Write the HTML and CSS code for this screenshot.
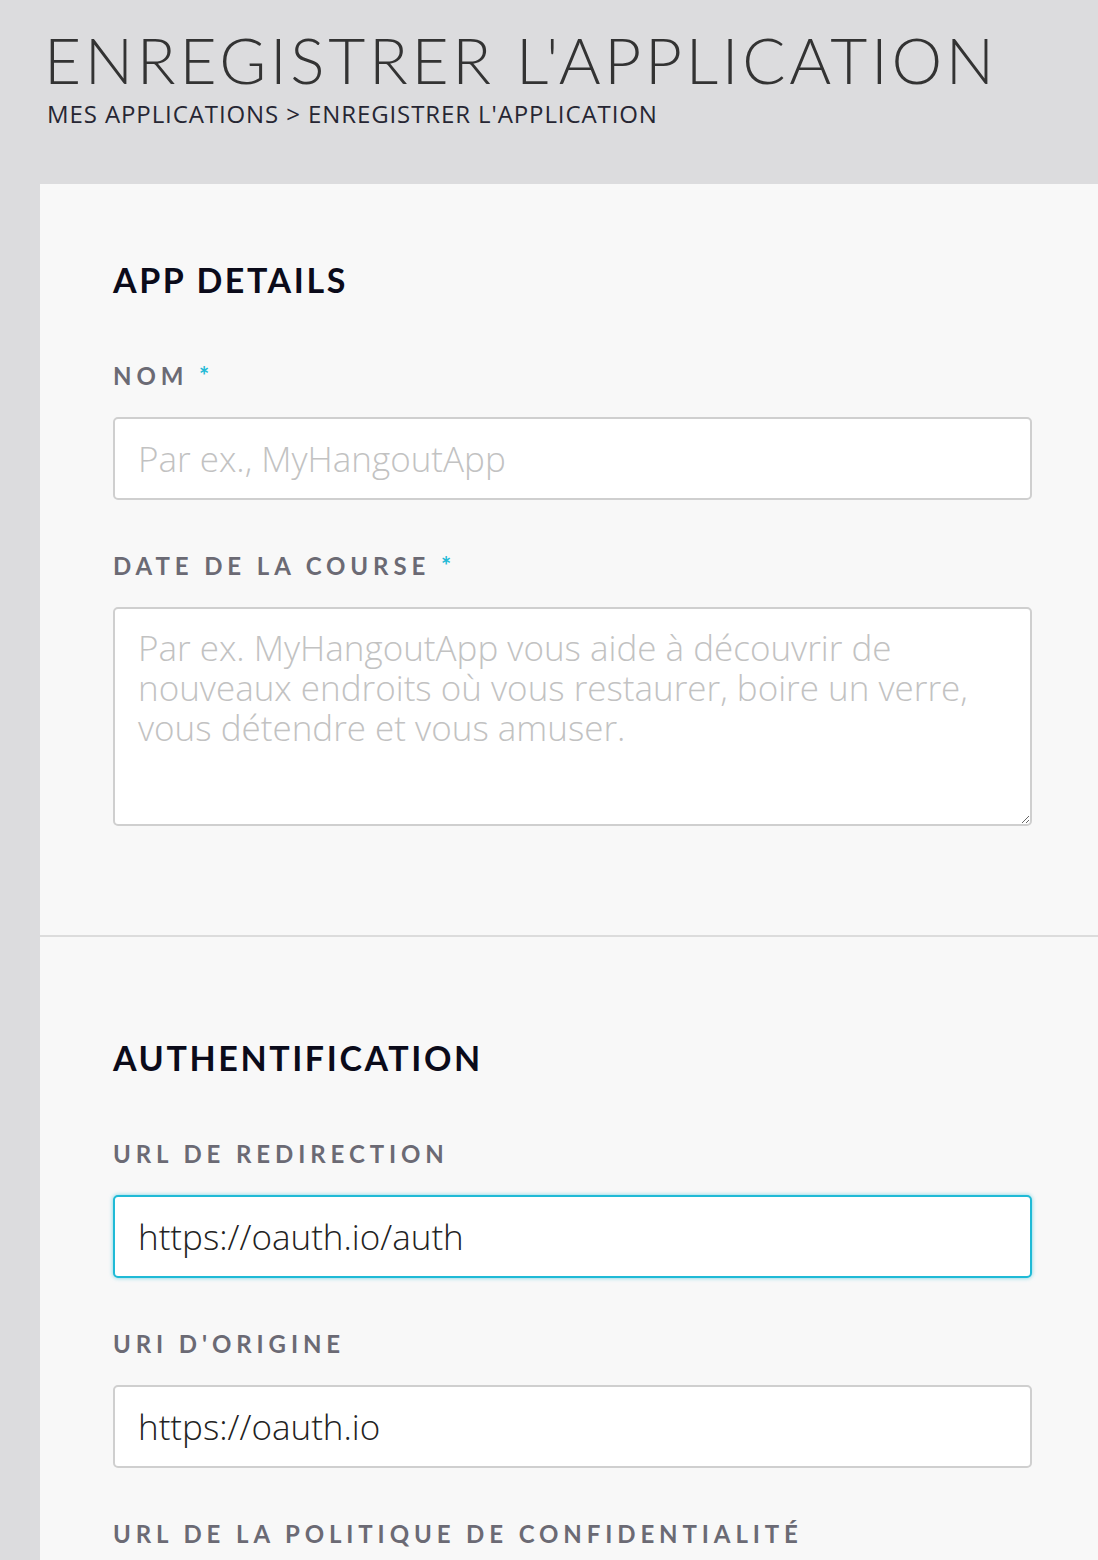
FILE: index.html
```html
<!DOCTYPE html>
<html lang="fr">
<head>
<meta charset="utf-8">
<title>Enregistrer l'application</title>
<link rel="stylesheet" href="styles.css">
</head>
<body>
<header class="page-header">
  <h1 class="page-title">ENREGISTRER L'APPLICATION</h1>
  <nav class="breadcrumb">MES APPLICATIONS &gt; ENREGISTRER L'APPLICATION</nav>
</header>
<main class="panel">
  <section class="section section-first">
    <h2 class="section-title">APP DETAILS</h2>
    <div class="field">
      <label class="field-label">NOM <span class="req">*</span></label>
      <input class="text-input" type="text" placeholder="Par ex., MyHangoutApp">
    </div>
    <div class="field">
      <label class="field-label">DATE DE LA COURSE <span class="req">*</span></label>
      <textarea class="text-area" placeholder="Par ex. MyHangoutApp vous aide à découvrir de nouveaux endroits où vous restaurer, boire un verre, vous détendre et vous amuser."></textarea>
    </div>
  </section>
  <section class="section section-second">
    <h2 class="section-title">AUTHENTIFICATION</h2>
    <div class="field">
      <label class="field-label">URL DE REDIRECTION</label>
      <input class="text-input is-focused" type="text" value="https://oauth.io/auth">
    </div>
    <div class="field">
      <label class="field-label">URI D'ORIGINE</label>
      <input class="text-input" type="text" value="https://oauth.io">
    </div>
    <div class="field">
      <label class="field-label">URL DE LA POLITIQUE DE CONFIDENTIALITÉ</label>
    </div>
  </section>
</main>
</body>
</html>
```
FILE: styles.css
```css
html, body {
  margin: 0;
  padding: 0;
}
body {
  background: #dcdcde;
  font-family: "Open Sans", "Liberation Sans", sans-serif;
  color: #333;
  height: 1560px;
  overflow: hidden;
}
.page-header {
  height: 184px;
  box-sizing: border-box;
  padding: 28px 0 0 44px;
}
.page-title {
  margin: 0;
  font-family: Lato, sans-serif;
  font-weight: 300;
  font-size: 64px;
  line-height: 64px;
  letter-spacing: 3.7px;
  color: #333;
}
.breadcrumb {
  margin: 8px 0 0 3px;
  font-family: "Open Sans", sans-serif;
  font-size: 24px;
  line-height: 28px;
  letter-spacing: 0.9px;
  color: #262633;
}
.panel {
  margin-left: 40px;
  background: #f8f8f8;
  min-height: 1376px;
}
.section {
  padding: 0 66px 0 73px;
}
.section-first {
  padding-top: 76px;
  padding-bottom: 109px;
  border-bottom: 2px solid #dcdcdc;
}
.section-second {
  padding-top: 101px;
}
.section-title {
  margin: 0 0 62px 0;
  font-family: Lato, sans-serif;
  font-weight: 700;
  font-size: 34px;
  line-height: 40px;
  letter-spacing: 2.6px;
  color: #0b0b1a;
}
.field {
  margin-bottom: 52px;
}
.field:last-child {
  margin-bottom: 0;
}
.field-label {
  display: block;
  font-family: Lato, sans-serif;
  font-weight: 700;
  font-size: 24px;
  line-height: 28px;
  letter-spacing: 4.9px;
  color: #6b6a74;
  margin-bottom: 27px;
}
.req {
  color: #1fbad6;
}
.text-input, .text-area {
  display: block;
  width: 100%;
  box-sizing: border-box;
  border: 2px solid #cfcfcf;
  border-radius: 5px;
  background: #fff;
  font-family: "Open Sans", sans-serif;
  font-weight: 300;
  font-size: 35px;
  color: #222;
  padding: 0 23px;
  outline: none;
}
.text-input {
  height: 83px;
}
.text-area {
  height: 219px;
  padding-top: 19px;
  line-height: 40px;
  resize: vertical;
}
.text-input::placeholder, .text-area::placeholder {
  color: #c2c2c2;
}
.text-input.is-focused {
  border-color: #1fbad6;
  box-shadow: 0 0 4px rgba(31, 186, 214, 0.6);
}
```
